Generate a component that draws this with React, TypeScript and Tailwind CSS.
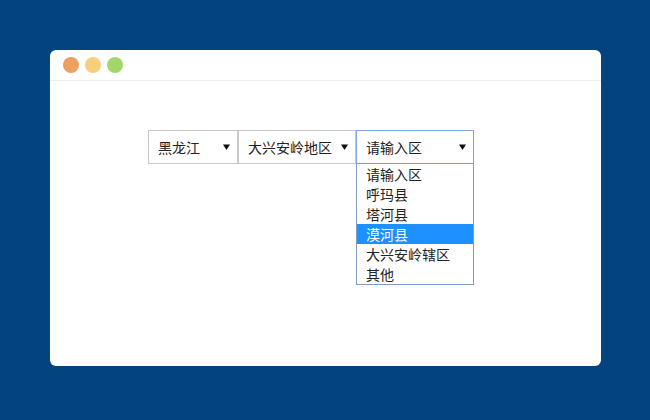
import React from 'react';

const font = { fontFamily: '"Noto Sans CJK SC", "Noto Sans", sans-serif' };

const options = ['请输入区', '呼玛县', '塔河县', '漠河县', '大兴安岭辖区', '其他'];

function Caret() {
  return (
    <svg width="7" height="6" viewBox="0 0 7 6" className="block">
      <path d="M0 0.5 L7 0.5 L3.5 6 Z" fill="#111" />
    </svg>
  );
}

function FakeSelect({ label, width, focused }: { label: string; width: string; focused?: boolean }) {
  return (
    <div
      className={`${width} h-[34px] flex items-center justify-between pl-[9px] pr-[7px] bg-white border ${
        focused ? 'border-[#7ea6e0]' : 'border-[#c8c8c8]'
      }`}
    >
      <span className="text-[14px] text-[#222]">{label}</span>
      <Caret />
    </div>
  );
}

export default function App() {
  return (
    <div className="w-[650px] h-[420px] bg-[#03437f] pt-[50px] pl-[50px]" style={font}>
      <div className="w-[551px] h-[316px] bg-white rounded-[6px] overflow-hidden">
        <div className="h-[31px] flex items-center gap-[6px] pl-[13px] border-b border-[#ececec]">
          <span className="w-4 h-4 rounded-full bg-[#eca062]" />
          <span className="w-4 h-4 rounded-full bg-[#f7cf7b]" />
          <span className="w-4 h-4 rounded-full bg-[#a4d66b]" />
        </div>
        <div className="flex pl-[98px] pt-[49px]">
          <FakeSelect label="黑龙江" width="w-[90px]" />
          <FakeSelect label="大兴安岭地区" width="w-[118px]" />
          <div className="relative">
            <FakeSelect label="请输入区" width="w-[118px]" focused />
            <div className="absolute left-0 top-[33px] w-[118px] bg-white border border-[#7f9dc0] flex flex-col">
              {options.map((o) => (
                <div
                  key={o}
                  className={`h-[20px] leading-[20px] pl-[9px] text-[14px] ${
                    o === '漠河县' ? 'bg-[#1e90ff] text-white' : 'text-[#222]'
                  }`}
                >
                  {o}
                </div>
              ))}
            </div>
          </div>
        </div>
      </div>
    </div>
  );
}
